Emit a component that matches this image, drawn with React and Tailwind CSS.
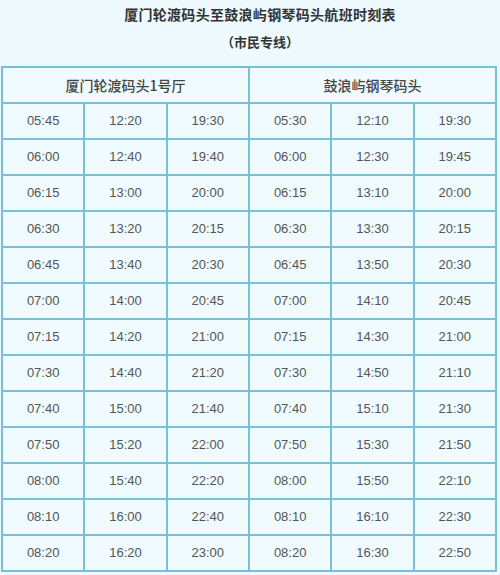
import React from "react"

const left = [
  ["05:45", "12:20", "19:30"],
  ["06:00", "12:40", "19:40"],
  ["06:15", "13:00", "20:00"],
  ["06:30", "13:20", "20:15"],
  ["06:45", "13:40", "20:30"],
  ["07:00", "14:00", "20:45"],
  ["07:15", "14:20", "21:00"],
  ["07:30", "14:40", "21:20"],
  ["07:40", "15:00", "21:40"],
  ["07:50", "15:20", "22:00"],
  ["08:00", "15:40", "22:20"],
  ["08:10", "16:00", "22:40"],
  ["08:20", "16:20", "23:00"],
]

const right = [
  ["05:30", "12:10", "19:30"],
  ["06:00", "12:30", "19:45"],
  ["06:15", "13:10", "20:00"],
  ["06:30", "13:30", "20:15"],
  ["06:45", "13:50", "20:30"],
  ["07:00", "14:10", "20:45"],
  ["07:15", "14:30", "21:00"],
  ["07:30", "14:50", "21:10"],
  ["07:40", "15:10", "21:30"],
  ["07:50", "15:30", "21:50"],
  ["08:00", "15:50", "22:10"],
  ["08:10", "16:10", "22:30"],
  ["08:20", "16:30", "22:50"],
]

const cjk = { fontFamily: '"Noto Sans CJK SC", "Liberation Sans", sans-serif' }

export default function App() {
  return (
    <div className="w-[500px] h-[575px] overflow-hidden bg-[#eefaff]">

      {/* TITLE */}
      <div className="h-[66px] pl-[20px] text-center text-[#333]" style={cjk}>
        <div className="h-[28px] leading-[28px] text-[14px] font-bold tracking-[0.3px]">
          厦门轮渡码头至鼓浪屿钢琴码头航班时刻表
        </div>
        <div className="h-[30px] leading-[28px] text-[13px] font-bold">
          （市民专线）
        </div>
      </div>

      {/* TIMETABLE */}
      <div className="pl-[1px]">
        <table className="w-[496px] table-fixed border-collapse bg-[#effbff]">
          <thead>
            <tr className="h-[36px]">
              <th
                colSpan={3}
                className="border-2 border-[#78c0d8] text-[14px] font-medium text-[#444]"
                style={cjk}
              >
                厦门轮渡码头1号厅
              </th>
              <th
                colSpan={3}
                className="border-2 border-[#78c0d8] text-[14px] font-medium text-[#444]"
                style={cjk}
              >
                鼓浪屿钢琴码头
              </th>
            </tr>
          </thead>
          <tbody className="font-['Liberation_Sans',Arial,sans-serif] text-[13px] text-[#555]">
            {left.map((row, i) => (
              <tr key={i} className="h-[36px]">
                {[...row, ...right[i]].map((t, j) => (
                  <td key={j} className="border-2 border-[#78c0d8] text-center">
                    {t}
                  </td>
                ))}
              </tr>
            ))}
          </tbody>
        </table>
      </div>

    </div>
  )
}
